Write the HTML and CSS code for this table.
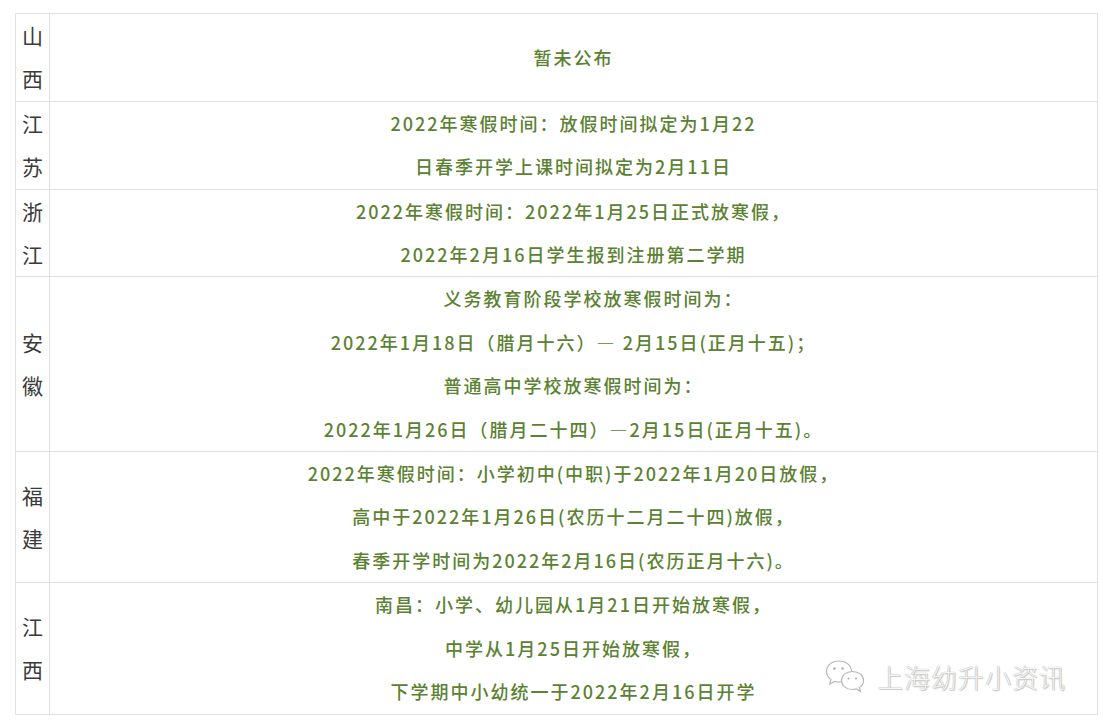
FILE: index.html
```html
<!DOCTYPE html>
<html lang="zh-CN">
<head>
<meta charset="utf-8">
<title>寒假时间</title>
<link rel="stylesheet" href="styles.css">
</head>
<body>
<div class="page">
  <table class="tbl">
    <tr>
      <td class="prov">山<br>西</td>
      <td class="info">暂未公布</td>
    </tr>
    <tr>
      <td class="prov">江<br>苏</td>
      <td class="info">2022年寒假时间：放假时间拟定为1月22<br>日春季开学上课时间拟定为2月11日</td>
    </tr>
    <tr>
      <td class="prov">浙<br>江</td>
      <td class="info">2022年寒假时间：2022年1月25日正式放寒假，<br>2022年2月16日学生报到注册第二学期</td>
    </tr>
    <tr>
      <td class="prov">安<br>徽</td>
      <td class="info"><span class="shift">义务教育阶段学校放寒假时间为：</span><br>2022年1月18日（腊月十六）— 2月15日(正月十五)；<br>普通高中学校放寒假时间为：<br>2022年1月26日（腊月二十四）—2月15日(正月十五)。</td>
    </tr>
    <tr>
      <td class="prov">福<br>建</td>
      <td class="info">2022年寒假时间：小学初中(中职)于2022年1月20日放假，<br>高中于2022年1月26日(农历十二月二十四)放假，<br>春季开学时间为2022年2月16日(农历正月十六)。</td>
    </tr>
    <tr>
      <td class="prov">江<br>西</td>
      <td class="info">南昌：小学、幼儿园从1月21日开始放寒假，<br>中学从1月25日开始放寒假，<br>下学期中小幼统一于2022年2月16日开学</td>
    </tr>
  </table>
  <div class="mark">
    <svg class="mark-icon" width="42" height="36" viewBox="0 0 42 36">
      <g fill="#ffffff" stroke="#b8b8b8" stroke-width="1.2">
        <path d="M14 2 C6.5 2 1.5 6.8 1.5 12.5 C1.5 16 3.3 18.8 6 20.6 L4.6 25 L9.6 22.4 C11 22.8 12.4 23 14 23 C21.5 23 26.5 18.2 26.5 12.5 C26.5 6.8 21.5 2 14 2 Z"/>
        <path d="M27.5 12.5 C21 12.5 16.5 16.6 16.5 21.5 C16.5 26.4 21 30.5 27.5 30.5 C28.8 30.5 30 30.3 31.2 30 L35.5 32.4 L34.4 28.6 C37 27 38.5 24.4 38.5 21.5 C38.5 16.6 34 12.5 27.5 12.5 Z"/>
      </g>
      <g fill="#b0b0b0">
        <circle cx="9.5" cy="9.5" r="1.3"/>
        <circle cx="17.5" cy="9.5" r="1.3"/>
        <circle cx="23.5" cy="19.5" r="1.1"/>
        <circle cx="31" cy="19.5" r="1.1"/>
      </g>
    </svg>
    <span class="mark-text">上海幼升小资讯</span>
  </div>
</div>
</body>
</html>
```

FILE: styles.css
```css
html, body {
  margin: 0;
  padding: 0;
  background: #ffffff;
}

.page {
  position: relative;
  width: 1103px;
  height: 724px;
  padding: 13px 0 0 15px;
  box-sizing: border-box;
  font-family: "Noto Sans CJK SC", "Noto Sans", sans-serif;
}

.tbl {
  border-collapse: collapse;
  width: 1083px;
  table-layout: fixed;
}

.tbl td {
  border: 1px solid #e0e0e0;
  padding: 0;
  vertical-align: middle;
}

.prov {
  width: 33px;
  text-align: center;
  font-size: 21px;
  line-height: 43.4px;
  color: #3a3a3a;
}

.info {
  text-align: center;
  font-size: 18px;
  line-height: 43.4px;
  letter-spacing: 2px;
  font-weight: 500;
  color: #5b8232;
}

.shift {
  padding-left: 40px;
}

.mark {
  position: absolute;
  left: 825px;
  top: 659px;
  display: flex;
  align-items: center;
  gap: 10px;
}

.mark-icon {
  display: block;
}

.mark-text {
  font-size: 26px;
  font-weight: 300;
  letter-spacing: 1px;
  color: #f6f6f6;
  text-shadow: 0 0 1px #8a8a8a, 1px 1px 1px rgba(0, 0, 0, 0.2);
  line-height: 34px;
}
```
